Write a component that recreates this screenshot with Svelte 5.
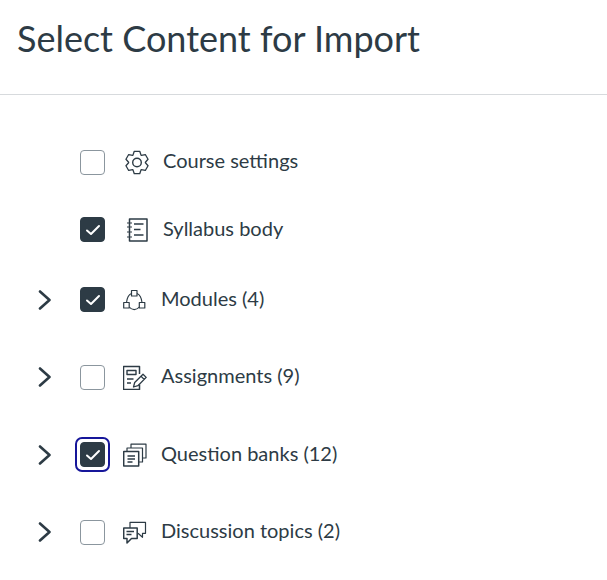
<script>
  const items = [
    { label: 'Course settings', icon: 'gear', checked: false, top: true },
    { label: 'Syllabus body', icon: 'book', checked: true, top: true },
    { label: 'Modules (4)', icon: 'modules', checked: true },
    { label: 'Assignments (9)', icon: 'assignment', checked: false },
    { label: 'Question banks (12)', icon: 'banks', checked: true, focused: true },
    { label: 'Discussion topics (2)', icon: 'discussion', checked: false }
  ];

  // six-tooth gear outline, points up
  function gearPath(cx, cy, outer, inner) {
    let d = '';
    for (let i = 0; i < 6; i++) {
      const a = (i * 60 - 90) * Math.PI / 180;
      const pts = [
        [inner, a - 0.5],
        [outer, a - 0.24],
        [outer, a + 0.24],
        [inner, a + 0.5]
      ];
      for (const [r, t] of pts) {
        d += (d ? 'L' : 'M') + (cx + r * Math.cos(t)).toFixed(2) + ' ' + (cy + r * Math.sin(t)).toFixed(2);
      }
    }
    return d + 'Z';
  }
</script>

<main class="page">
  <h1>Select Content for Import</h1>
  <ul class="tree">
    {#each items as item}
      <li class="row" class:plain={item.top}>
        <span class="toggle">
          {#if !item.top}
            <svg width="14" height="20" viewBox="0 0 14 20">
              <path d="M2 1.500 L11.500 10 L2 18.500" fill="none" stroke="#2d3b45" stroke-width="2.600" stroke-linecap="round" stroke-linejoin="round" />
            </svg>
          {/if}
        </span>
        <span class="box" class:checked={item.checked} class:focused={item.focused}>
          {#if item.checked}
            <svg width="16" height="12" viewBox="0 0 16 12">
              <path d="M2 6.500 L6 10 L14 2" fill="none" stroke="#fff" stroke-width="2" stroke-linecap="round" stroke-linejoin="round" />
            </svg>
          {/if}
        </span>
        <span class="icon">
          <svg width="24" height="25" viewBox="0 0 24 25" fill="none" stroke="#2d3b45" stroke-width="1.300" stroke-linejoin="round">
            {#if item.icon === 'gear'}
              <circle cx="12" cy="12.500" r="4.300" stroke-width="1.400" />
              <path d={gearPath(12, 12.500, 11.500, 8.400)} stroke-width="1.300" />
            {:else if item.icon === 'book'}
              <path d="M4.500 2h17.500v22H4.500z" stroke-width="1.500" />
              <path d="M2 6h5M2 10h5M2 15h5M2 20h5" stroke-width="1.200" />
              <path d="M9 7h9.500M9 12.500h6.500M9 18h9.500" stroke-width="1.600" />
            {:else if item.icon === 'modules'}
              <path d="M8.500 3.500h5.500v5.500H8.500zM.7 15.500h5.500v5.500H.7zM16.300 15.500h5.500v5.500h-5.500z" stroke-width="1.200" />
              <path d="M8.500 6.500C6 7.500 4 11 3.500 15.500M14 6.500C16.500 7.500 18.500 11 19 15.500M6.200 20c2.800 3.500 7.300 3.500 10.100 0" stroke-width="1.100" />
            {:else if item.icon === 'assignment'}
              <path d="M16.500 9V1.500H.5v23h16v-5" stroke-width="1.500" />
              <path d="M4 5.500h9v4H4zM4 14h6.500M4 18h4" stroke-width="1.400" />
              <path d="M10.500 22l1.200-4.500 8.300-8.300 3.200 3.200-8.300 8.300zM18 11.200l3.200 3.200" stroke-width="1.300" />
            {:else if item.icon === 'banks'}
              <path d="M.7 9.500h15v14.500H.7z" stroke-width="1.500" />
              <path d="M4 9.500V6h15.500v14h-3.800M8 6V2.200h15V16h-3.500" stroke-width="1.200" />
              <path d="M4.500 14h7.500M4.500 17h7.500M4.500 20h5" stroke-width="1.500" />
            {:else}
              <path d="M.7 8h13.500v10.500H8.500L4 23v-4.500H.7z" stroke-width="1.500" />
              <path d="M7 8V2.300h15.500v11h-3v4l-4.500-4" stroke-width="1.200" />
              <path d="M3.500 11.500h7.500M3.500 14.500h5" stroke-width="1.500" />
            {/if}
          </svg>
        </span>
        <span class="label">{item.label}</span>
      </li>
    {/each}
  </ul>
</main>

<style>
  :global(body) {
    background: #fff;
  }

  .page {
    font-family: Lato, sans-serif;
    color: #2d3b45;
    height: 580px;
    overflow: hidden;
  }

  h1 {
    margin: 0;
    padding: 0 17px;
    height: 95px;
    line-height: 77px;
    font-size: 36px;
    font-weight: 400;
    border-bottom: 1px solid #d7dadd;
    box-sizing: border-box;
  }

  .tree {
    list-style: none;
    margin: 0;
    padding: 55px 0 0;
  }

  .row {
    display: flex;
    align-items: center;
    height: 25px;
    margin-bottom: 52.500px;
    font-size: 20px;
  }

  .row.plain {
    margin-bottom: 42px;
  }

  .row.plain + .row:not(.plain) {
    margin-top: 45px;
  }

  .toggle {
    width: 80px;
    padding-left: 38px;
    box-sizing: border-box;
    display: flex;
    align-items: center;
  }

  .box {
    position: relative;
    width: 25px;
    height: 25px;
    box-sizing: border-box;
    border: 1px solid #8b969e;
    border-radius: 4px;
    display: flex;
    align-items: center;
    justify-content: center;
  }

  .box.checked {
    background: #2d3b45;
    border-color: #2d3b45;
  }

  .box.focused::after {
    content: '';
    position: absolute;
    inset: -6px;
    border: 2px solid #16169a;
    border-radius: 7px;
  }

  .icon {
    width: 24px;
    height: 25px;
    margin: 0 14px 0 18px;
    display: flex;
  }

  .plain .icon {
    margin-left: 20px;
  }

  .label {
    position: relative;
    top: -2px;
  }

  .row:first-child .label {
    top: -3px;
  }
</style>
